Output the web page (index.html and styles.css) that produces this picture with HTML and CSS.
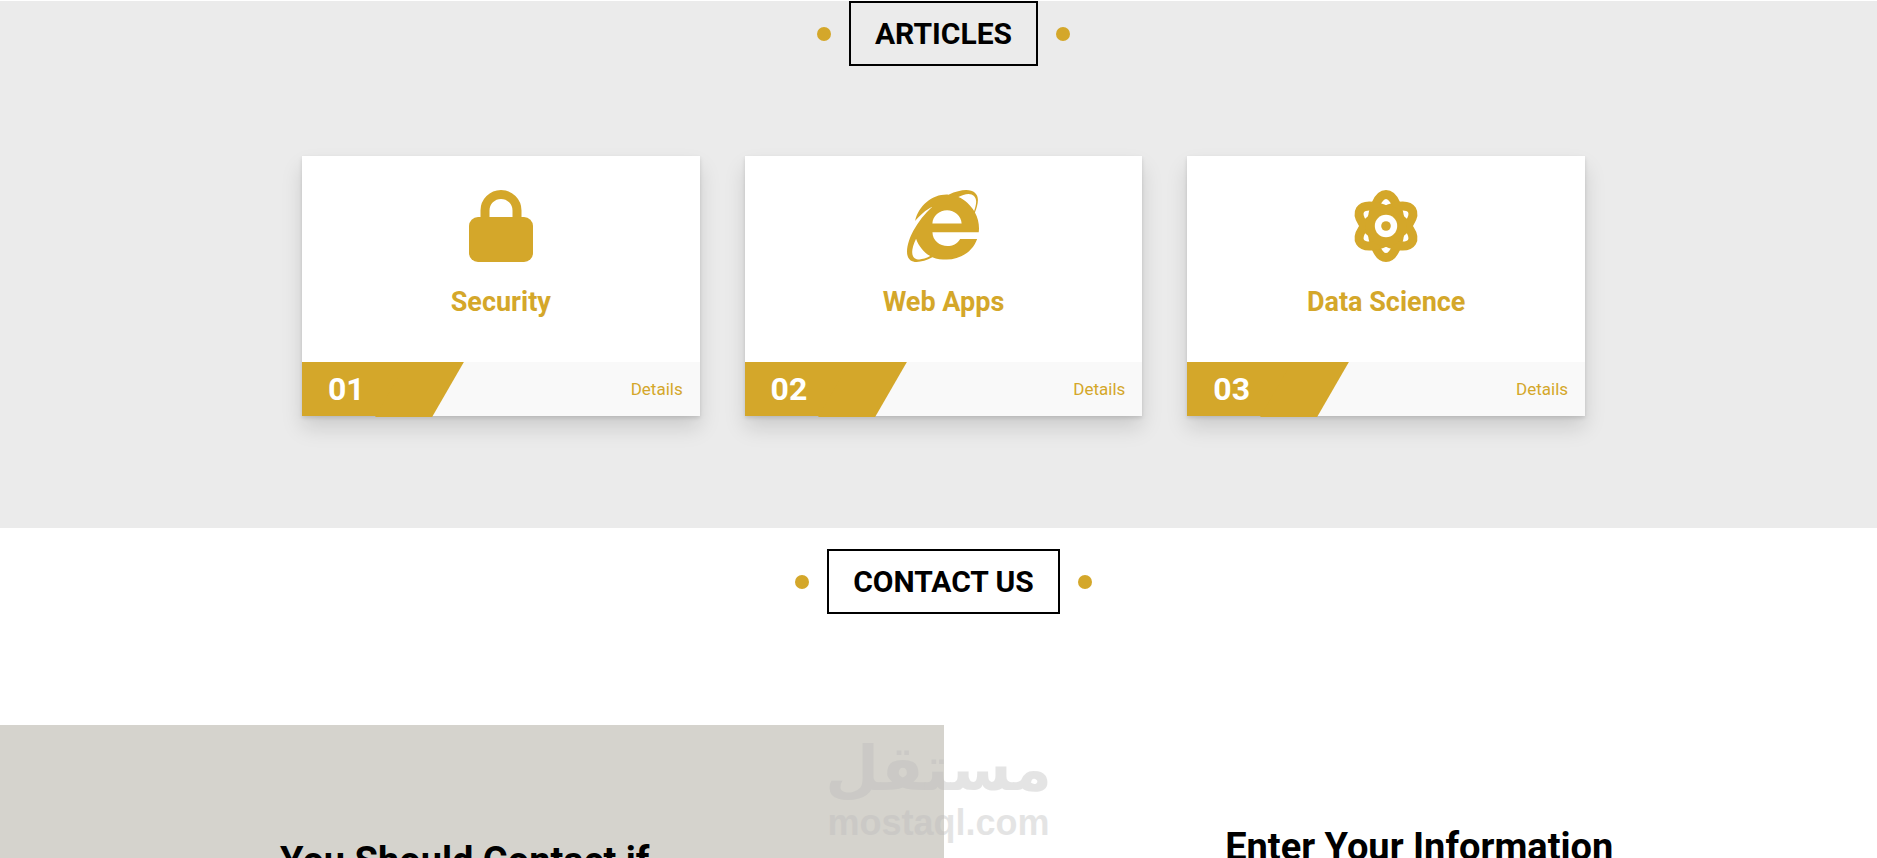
FILE: index.html
```html
<!DOCTYPE html>
<html lang="en">
<head>
  <meta charset="UTF-8">
  <meta name="viewport" content="width=device-width, initial-scale=1.0">
  <title>Articles</title>
  <link rel="stylesheet" href="styles.css">
</head>
<body>
  <main class="page">

    <!-- Articles -->
    <section class="articles" id="articles">
      <h2 class="main-title"><span>ARTICLES</span></h2>
      <div class="container">
        <article class="card">
          <div class="card-body">
            <svg class="icon" viewBox="0 0 72 72" aria-hidden="true">
              <path d="M20 30V20.5a16 16 0 0 1 32 0V30" fill="none" stroke="currentColor" stroke-width="9"/>
              <rect x="4" y="27" width="64" height="45" rx="9"/>
            </svg>
            <h3>Security</h3>
          </div>
          <div class="info">
            <span class="number">01</span>
            <a href="#security">Details</a>
          </div>
        </article>

        <article class="card">
          <div class="card-body">
            <svg class="icon" viewBox="0 0 512 512" aria-hidden="true">
              <path d="M483.049 159.706c10.855-24.575 21.424-60.438 21.424-87.871 0-72.722-79.641-98.371-209.673-38.577-107.632-7.181-211.221 73.67-237.098 186.457 30.852-34.862 78.271-82.298 121.977-101.158C125.404 166.85 79.128 228.002 43.992 291.725 23.246 329.651 0 390.94 0 436.747c0 98.575 92.854 86.5 180.251 42.006 31.423 15.43 66.559 15.573 101.695 15.573 97.124 0 184.249-54.294 216.814-146.022H377.927c-52.509 88.593-196.819 52.996-196.819-47.436H509.9c6.407-43.581-1.655-95.715-26.851-141.162zM64.559 346.877c17.711 51.15 53.703 95.871 100.266 123.304-88.741 48.94-173.267 29.096-100.266-123.304zm115.977-108.873c2-55.152 50.276-94.871 103.98-94.871 53.418 0 101.981 39.719 103.981 94.871H180.536zm184.536-187.6c21.425-10.287 48.563-22.003 72.558-22.003 31.422 0 54.274 21.717 54.274 53.722 0 20.003-7.427 49.007-14.569 67.867-26.28-42.294-65.986-81.584-112.263-99.586z"/>
            </svg>
            <h3>Web Apps</h3>
          </div>
          <div class="info">
            <span class="number">02</span>
            <a href="#web-apps">Details</a>
          </div>
        </article>

        <article class="card">
          <div class="card-body">
            <svg class="icon" viewBox="0 0 72 72" aria-hidden="true">
              <g fill="none" stroke="currentColor" stroke-width="9">
                <ellipse cx="36" cy="36" rx="14" ry="31.5"/>
                <ellipse cx="36" cy="36" rx="14" ry="30.5" transform="rotate(58 36 36)"/>
                <ellipse cx="36" cy="36" rx="14" ry="30.5" transform="rotate(-58 36 36)"/>
              </g>
              <circle cx="36" cy="36" r="20.5"/>
              <circle cx="36" cy="36" r="11.2" fill="#fff"/>
              <circle cx="36" cy="36" r="4.8"/>
            </svg>
            <h3>Data Science</h3>
          </div>
          <div class="info">
            <span class="number">03</span>
            <a href="#data-science">Details</a>
          </div>
        </article>
      </div>
    </section>

    <!-- Contact -->
    <section class="contact" id="contact">
      <h2 class="main-title"><span>CONTACT US</span></h2>
      <div class="content">
        <div class="reasons">
          <h2>You Should Contact if</h2>
        </div>
        <div class="form">
          <h2>Enter Your Information</h2>
        </div>
        <div class="watermark">
          <span class="watermark-ar" lang="ar" dir="rtl">مستقل</span>
          <span class="watermark-en">mostaql.com</span>
        </div>
      </div>
    </section>

  </main>
</body>
</html>
```

FILE: styles.css
```css
:root {
  --main-color: #d4a72a;
  --section-background: #ebebeb;
}

* {
  box-sizing: border-box;
}

body {
  margin: 0;
  padding-top: 1px;
  font-family: Roboto, "Liberation Sans", sans-serif;
  background-color: #fff;
  color: #000;
  overflow-x: hidden;
}

.page {
  margin-right: -10px;
}

/* Section titles */
.main-title {
  display: flex;
  justify-content: center;
  align-items: center;
  gap: 18px;
  margin: 0;
  font-size: 30px;
  line-height: 37px;
}

.main-title span {
  padding: 12px 24px;
  border: 2px solid #000;
}

.main-title::before,
.main-title::after {
  content: "";
  width: 14px;
  height: 14px;
  border-radius: 50%;
  background-color: var(--main-color);
}

/* Articles */
.articles {
  padding-bottom: 112px;
  background-color: var(--section-background);
}

.container {
  display: flex;
  justify-content: space-between;
  width: 68%;
  margin: 90px auto 0;
}

.card {
  width: 31%;
  background-color: #fff;
  box-shadow: 0 12px 20px 0 rgb(0 0 0 / 13%), 0 2px 4px 0 rgb(0 0 0 / 12%);
}

.card-body {
  padding: 34px 20px 44px;
  text-align: center;
}

.icon {
  display: block;
  width: 72px;
  height: 72px;
  margin: 0 auto;
  fill: currentColor;
  color: var(--main-color);
}

.card h3 {
  margin: 24px 0 0;
  font-size: 27px;
  line-height: 32px;
  color: var(--main-color);
}

.info {
  display: flex;
  justify-content: space-between;
  align-items: center;
  height: 54px;
  padding-right: 17px;
  background-color: #f9f9f9;
}

.number {
  position: relative;
  width: 118px;
  padding-left: 26px;
  background-color: var(--main-color);
  color: #fff;
  font-size: 32px;
  font-weight: bold;
  line-height: 54px;
}

.number::after {
  content: "";
  position: absolute;
  top: 0;
  left: 89px;
  width: 57px;
  height: 55px;
  background-color: var(--main-color);
  transform: skewX(-30deg);
}

.info a {
  color: var(--main-color);
  font-size: 17px;
  text-decoration: none;
}

/* Contact */
.contact {
  padding-top: 21px;
}

.content {
  position: relative;
  display: flex;
  margin-top: 111px;
}

.reasons,
.form {
  width: 50%;
  padding-bottom: 100px;
  text-align: center;
}

.reasons {
  padding-top: 112px;
  padding-right: 14px;
  background-color: #d5d3cd;
}

.form {
  padding-top: 98px;
  padding-left: 8px;
}

.content h2 {
  margin: 0;
  font-size: 38px;
  line-height: 48px;
}

/* Watermark over both halves */
.watermark {
  position: absolute;
  top: 8px;
  left: 0;
  right: 10px;
  display: flex;
  flex-direction: column;
  align-items: center;
  color: #bbb;
  opacity: 0.38;
  pointer-events: none;
}

.watermark-ar {
  font-family: "DejaVu Sans", sans-serif;
  font-size: 62px;
  font-weight: bold;
  line-height: 72px;
}

.watermark-en {
  font-family: "Liberation Sans", sans-serif;
  font-size: 36px;
  font-weight: bold;
  line-height: 36px;
}
```
